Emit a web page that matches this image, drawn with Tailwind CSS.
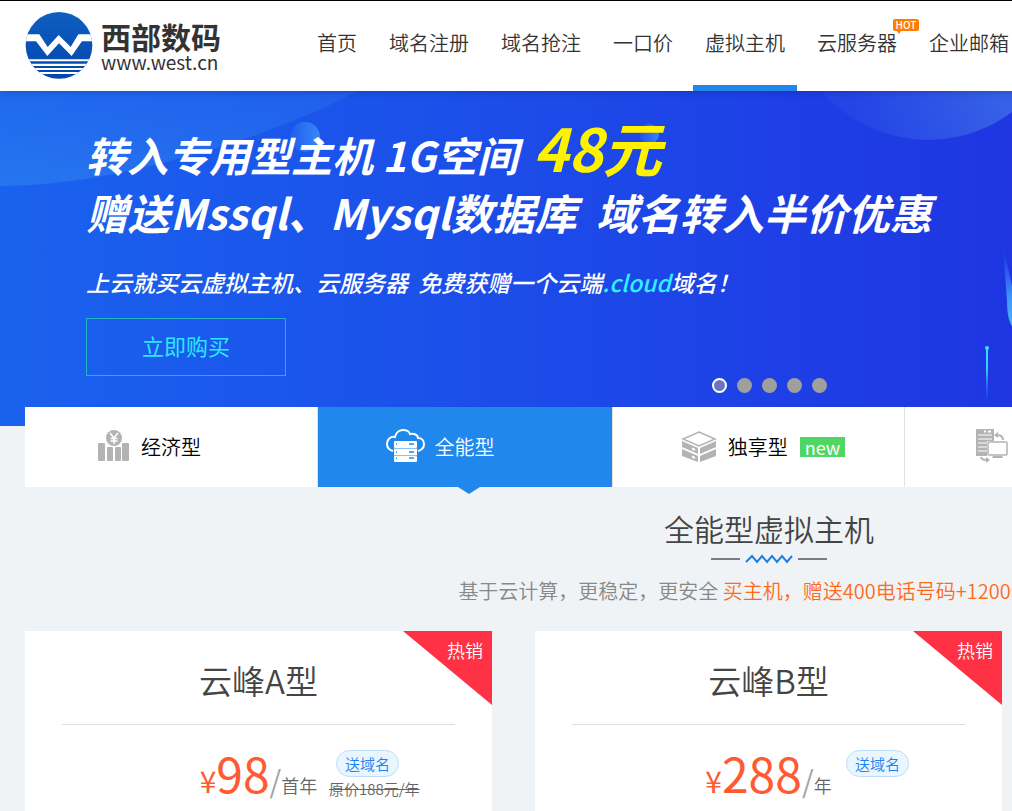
<!DOCTYPE html>
<html lang="zh-CN">

<head>
    <meta charset="UTF-8">
    <meta name="viewport" content="width=device-width, initial-scale=1.0">
    <title>西部数码</title>
    <script src="https://cdn.jsdelivr.net/npm/@tailwindcss/browser@4"></script>
</head>

<body class="overflow-x-hidden bg-[#eff3f5] font-['Noto_Sans_CJK_SC',sans-serif] font-[350] text-[#333]">
    <div class="flex flex-col min-w-[1538px] min-h-screen">
        <header class="relative z-10 flex items-stretch h-[91px] border-t border-black bg-white pl-[25px] shadow-md">
            <a href="#" class="flex items-center gap-2 w-[280px]">
                <svg class="w-[68px] h-[68px] shrink-0" viewBox="0 0 204 204">
                    <defs>
                        <linearGradient id="logoFill" x1="0" y1="0" x2="0" y2="1">
                            <stop offset="0" stop-color="#0d5fc0" />
                            <stop offset="1" stop-color="#0245ae" />
                        </linearGradient>
                        <clipPath id="logoClip">
                            <circle cx="102" cy="100" r="100" />
                        </clipPath>
                    </defs>
                    <g clip-path="url(#logoClip)">
                        <rect width="204" height="204" fill="url(#logoFill)" />
                        <path d="M0 67H43L68 105L101 69L137 105L160 67H204V88H171L140 132L102 94L67 132L33 88H0z" fill="#fff" />
                        <path d="M0 142H204V148H0zM0 155H204V162H0zM0 168H204V174H0zM0 180H204V186H0z" fill="#fff" />
                    </g>
                </svg>
                <span class="flex flex-col">
                    <span class="text-[30px] leading-8 font-bold">西部数码</span>
                    <span class="text-[19px] leading-5 font-normal">www.west.cn</span>
                </span>
            </a>
            <nav class="flex gap-2 text-[20px] whitespace-nowrap">
                <a href="#" class="px-3 pt-7 leading-7">首页</a>
                <a href="#" class="px-3 pt-7 leading-7">域名注册</a>
                <a href="#" class="px-3 pt-7 leading-7">域名抢注</a>
                <a href="#" class="px-3 pt-7 leading-7">一口价</a>
                <a href="#" class="px-3 pt-7 leading-7 border-b-6 border-[#2088ec]">虚拟主机</a>
                <a href="#" class="relative px-3 pt-7 leading-7">云服务器
                    <span class="absolute top-[18px] -right-[10px] w-[26px] h-3 rounded-xs bg-[#ff7e00] text-center text-[10px] leading-3 font-medium text-white">HOT
                        <svg class="absolute left-1 top-3 w-1 h-1" viewBox="0 0 4 4"><path d="M0 0H4L2 3z" fill="#ff7e00" /></svg>
                    </span>
                </a>
                <a href="#" class="px-3 pt-7 leading-7">企业邮箱</a>
            </nav>
        </header>

        <section class="relative h-[335px] overflow-hidden bg-linear-to-r from-[#1a62ee] via-[#1e40e6] via-50% to-[#2018d8]">
            <svg class="absolute left-0 top-0 w-full h-[335px]">
                <defs>
                    <linearGradient id="wave" x1="0" y1="0" x2="0" y2="1">
                        <stop offset="0" stop-color="#2f80f0" stop-opacity=".25" />
                        <stop offset="1" stop-color="#3a92f2" stop-opacity=".4" />
                    </linearGradient>
                    <linearGradient id="ball" x1="0" y1="0" x2="1" y2="0">
                        <stop offset="0" stop-color="#46a4ff" stop-opacity=".1" />
                        <stop offset="1" stop-color="#46a4ff" stop-opacity=".65" />
                    </linearGradient>
                    <linearGradient id="moon" gradientUnits="userSpaceOnUse" x1="860" y1="50" x2="1000" y2="0">
                        <stop offset="0" stop-color="#5aa0f0" stop-opacity=".08" />
                        <stop offset="1" stop-color="#5aa0f0" stop-opacity=".4" />
                    </linearGradient>
                    <linearGradient id="beam" x1="0" y1="0" x2="0" y2="1">
                        <stop offset="0" stop-color="#36e6ff" />
                        <stop offset=".4" stop-color="#30c8fa" />
                        <stop offset="1" stop-color="#2040e4" stop-opacity="0" />
                    </linearGradient>
                    <linearGradient id="glow" x1="0" y1="0" x2="0" y2="1">
                        <stop offset="0" stop-color="#2f6cf0" stop-opacity="0" />
                        <stop offset=".6" stop-color="#3f95fa" />
                        <stop offset="1" stop-color="#52b4ff" />
                    </linearGradient>
                </defs>
                <path d="M0 95C60 95 120 83 170 70C240 52 300 30 358 0H0z" fill="url(#wave)" />
                <circle cx="305" cy="46" r="15" fill="url(#ball)" />
                <circle cx="649" cy="43" r="10" fill="url(#ball)" />
                <circle cx="928" cy="-91" r="140" fill="url(#moon)" />
                <path d="M1003 155L1012 195L1020 240C1010 240 1007 225 1007 210z" fill="url(#glow)" />
                <rect x="986" y="256" width="2" height="60" fill="url(#beam)" />
                <circle cx="987" cy="257" r="2" fill="#36e6ff" />
            </svg>
            <div class="relative flex flex-col items-start pl-[86px] pt-[26px] text-white whitespace-nowrap">
                <h2 class="text-[41px] leading-[60px] font-bold italic">转入专用型主机 1G空间 <span class="ml-[6px] text-[59px] text-[#fff200]">48元</span></h2>
                <p class="text-[42px] leading-[56px] font-bold italic">赠送Mssql、Mysql数据库&nbsp; 域名转入半价优惠</p>
                <p class="mt-[26px] text-[23px] leading-8 font-medium italic">上云就买云虚拟主机、云服务器&nbsp; 免费获赠一个云端<span class="text-[#2ff0ff]">.cloud</span>域名！</p>
                <button class="mt-5 w-[200px] h-[58px] border border-[#1fb8c2] pb-1 text-[22px] font-normal text-[#2ee6ff]">立即购买</button>
            </div>
            <div class="absolute inset-x-0 bottom-[33px] flex justify-center gap-[10px]">
                <button aria-label="1" class="size-[15px] rounded-full border-2 border-white bg-[#6c74c6]"></button>
                <button aria-label="2" class="size-[15px] rounded-full bg-[#9f9f9f]"></button>
                <button aria-label="3" class="size-[15px] rounded-full bg-[#9f9f9f]"></button>
                <button aria-label="4" class="size-[15px] rounded-full bg-[#9f9f9f]"></button>
                <button aria-label="5" class="size-[15px] rounded-full bg-[#9f9f9f]"></button>
            </div>
        </section>

        <main class="flex flex-col grow px-[25px]">
            <div class="relative -mt-[19px] grid grid-cols-5 w-[1467px] h-20 text-[20px] text-black">
                <a href="#" class="flex items-center gap-2 border-r border-[#e2e2e2] bg-white pl-[68px]">
                    <svg class="w-10 h-10" viewBox="0 0 40 40" fill="#b3b3b3">
                        <circle cx="21" cy="11" r="8" />
                        <rect x="5" y="16" width="7" height="18" rx="1" />
                        <rect x="14" y="20" width="6" height="14" rx="1" />
                        <rect x="22" y="20" width="6" height="14" rx="1" />
                        <rect x="29" y="16" width="7" height="18" rx="1" />
                        <path d="M17 6L21 11L25 6M21 11V17M17.500 11.500H24.500M17.500 14H24.500" fill="none" stroke="#fff" stroke-width="1.500" />
                    </svg>
                    经济型
                </a>
                <a href="#" class="relative flex items-center gap-2 bg-[#2088ec] pl-[68px] text-white">
                    <svg class="w-10 h-10" viewBox="0 0 40 40">
                        <path d="M7 24C3 23 1 20 1 17C1 12 5 9 9 10C10 5 14 3 17 3C20 3 23 4 24 7C28 6 32 8 32 11C36 11 38 14 38 17C38 20 36 23 32 24" fill="none" stroke="#fff" stroke-width="2" />
                        <rect x="8" y="14" width="23" height="7" rx="1" fill="#fff" />
                        <rect x="8" y="22" width="23" height="6" fill="#fff" />
                        <rect x="8" y="29" width="23" height="6" rx="1" fill="#fff" />
                        <path d="M8 21.500H31M8 28.500H31" stroke="#8cc2f6" />
                        <path d="M23 17H28M23 25H28M23 31H28M10 17H11M10 25H11M10 31H11" stroke="#2088ec" stroke-width="1.500" />
                    </svg>
                    全能型
                    <svg class="absolute left-[140px] top-20 w-[22px] h-[7px]" viewBox="0 0 22 7"><path d="M0 0H22L11 7z" fill="#2088ec" /></svg>
                </a>
                <a href="#" class="flex items-center gap-2 border-x border-[#e2e2e2] bg-white pl-[67px]">
                    <svg class="w-10 h-10" viewBox="0 0 40 40" fill="#b3b3b3">
                        <path d="M19 5L35 12L19 19L3 12z" fill="#fff" stroke="#b3b3b3" stroke-width="1.500" />
                        <path d="M2 14L18 21V27L2 20zM36 14L20 21V27L36 20zM2 22L18 29V35L2 29zM36 22L20 29V35L36 29z" />
                        <path d="M12 21.500L15 23M12 29.500L15 31" stroke="#fff" stroke-width="2" />
                    </svg>
                    独享型
                    <span class="ml-1 bg-[#50d664] px-[5px] text-[18px] leading-5 font-normal text-white">new</span>
                </a>
                <a href="#" aria-label="主机" class="flex items-center bg-white pl-[68px]">
                    <svg class="w-10 h-10" viewBox="0 0 40 40" fill="#b3b3b3">
                        <path d="M3 2H21V14H14V29H3z" />
                        <path d="M5 8H19M5 12H19M5 16H14M5 20H14M5 24H14" stroke="#fff" />
                        <path d="M11 4.500H13M15 4.500H18" stroke="#fff" stroke-width="2" />
                        <rect x="15" y="15" width="19" height="13" rx="1" fill="#fff" stroke="#b3b3b3" stroke-width="1.500" />
                        <path d="M20 29H29L30 31H19z" />
                        <path d="M30 13C30 9 27 8 24 8M8 30C8 33 11 33 15 33" fill="none" stroke="#b3b3b3" stroke-width="2" />
                        <path d="M21 8L25 5V11zM17 33L13 30V36z" />
                    </svg>
                </a>
            </div>

            <div class="flex flex-col items-center pt-[18px]">
                <h1 class="text-[30px] leading-[46px] text-[#444]">全能型虚拟主机</h1>
                <div class="mt-[2px] flex items-center gap-[5px] h-3">
                    <span class="w-[29px] h-[2px] bg-[#7c7c84]"></span>
                    <svg class="w-12 h-3" viewBox="0 0 48 12"><path d="M1 9L7 3L12 9L17 3L22 9L27 3L32 9L37 3L42 9L47 3" fill="none" stroke="#1f80e4" stroke-width="2" /></svg>
                    <span class="w-[29px] h-[2px] bg-[#7c7c84]"></span>
                </div>
                <p class="mt-[10px] text-[20px] leading-8 text-[#888]">基于云计算，更稳定，更安全 <span class="text-[#ff6a1a]">买主机，赠送400电话号码+1200元话费</span>&nbsp;&nbsp;</p>
            </div>

            <div class="mt-6 grid grid-cols-3 gap-[43px] w-[1487px] grow">
                <section class="relative bg-white px-[37px]">
                    <svg class="absolute right-0 top-0 w-[89px] h-[74px]" viewBox="0 0 89 74"><path d="M0 0H89V74z" fill="#ff3144" /></svg>
                    <span class="absolute right-[9px] top-[7px] text-[18px] leading-6 text-white">热销</span>
                    <h3 class="h-[94px] border-b border-[#ddd] pt-[25px] text-center text-[33px] leading-[48px] text-[#444]">云峰A型</h3>
                    <p class="pt-[17px] text-center leading-[60px] text-[#ff5a32]"><span class="text-[30px] font-normal">¥</span><span class="text-[48px] font-normal">98</span><span class="text-[30px] font-normal text-[#a5a5a5]">/</span><span class="text-[18px] text-[#666]">首年</span></p>
                    <span class="absolute left-[311px] top-[119px] rounded-full border border-[#bfdcf9] bg-[#e8f7ff] px-2 text-[15px] leading-[25px] text-[#1e80f0]">送域名</span>
                    <del class="absolute left-[304px] top-[148px] text-[15px] leading-5 text-[#666]">原价188元/年</del>
                </section>
                <section class="relative bg-white px-[37px]">
                    <svg class="absolute right-0 top-0 w-[89px] h-[74px]" viewBox="0 0 89 74"><path d="M0 0H89V74z" fill="#ff3144" /></svg>
                    <span class="absolute right-[9px] top-[7px] text-[18px] leading-6 text-white">热销</span>
                    <h3 class="h-[94px] border-b border-[#ddd] pt-[25px] text-center text-[33px] leading-[48px] text-[#444]">云峰B型</h3>
                    <p class="pt-[17px] text-center leading-[60px] text-[#ff5a32]"><span class="text-[30px] font-normal">¥</span><span class="text-[48px] font-normal">288</span><span class="text-[30px] font-normal text-[#a5a5a5]">/</span><span class="text-[18px] text-[#666]">年</span></p>
                    <span class="absolute left-[311px] top-[119px] rounded-full border border-[#bfdcf9] bg-[#e8f7ff] px-2 text-[15px] leading-[25px] text-[#1e80f0]">送域名</span>
                </section>
            </div>
        </main>
    </div>
</body>

</html>
